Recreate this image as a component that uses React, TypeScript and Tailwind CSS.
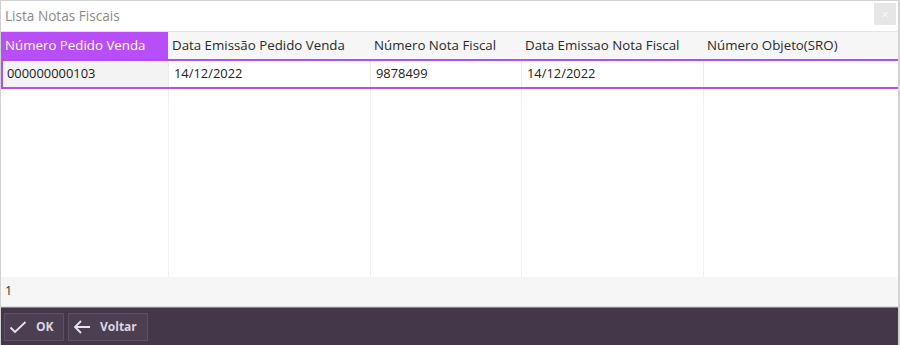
import React from "react";

const cols = [
  { w: "w-[167px]", title: "Número Pedido Venda", val: "000000000103" },
  { w: "w-[202px]", title: "Data Emissão Pedido Venda", val: "14/12/2022" },
  { w: "w-[151px]", title: "Número Nota Fiscal", val: "9878499" },
  { w: "w-[182px]", title: "Data Emissao Nota Fiscal", val: "14/12/2022" },
  { w: "flex-1", title: "Número Objeto(SRO)", val: "" },
];

export default function App() {
  return (
    <div
      className="w-[900px] h-[345px] bg-white flex flex-col border-l border-t border-r-2 border-[#d2d2d2] text-[12px] text-[#222]"
      style={{ fontFamily: '"Segoe UI", "Open Sans", "Noto Sans", sans-serif' }}
    >
      {/* title bar */}
      <div className="h-[30px] flex items-center justify-between pl-[4px] pr-[2px]">
        <span className="text-[13.6px] text-[#8a8a8a]">Lista Notas Fiscais</span>
        <div className="w-[22px] h-[22px] bg-[#e6e6e6] flex items-center justify-center text-[#f8f8f8] text-[13px] leading-none -mt-[4px]">
          ×
        </div>
      </div>
      {/* header */}
      <div className="h-[28px] flex bg-[#f6f6f6] border-t border-[#e4e4e4] text-[13.3px]">
        {cols.map((c, i) => (
          <div
            key={i}
            className={`${c.w} flex items-center whitespace-nowrap px-[4px] ${
              i === 0 ? "bg-[#b84ef5] text-white" : "text-[#2a2a2a]"
            }`}
          >
            {c.title}
          </div>
        ))}
      </div>
      {/* selected row */}
      <div className="h-[30px] flex border-y-2 border-[#b050ee] text-[12.9px]">
        {cols.map((c, i) => (
          <div
            key={i}
            className={`${c.w} flex items-center px-[4px] ${
              i === 0 ? "bg-[#f3f3f3] border-l-2 border-[#b050ee] pl-[4px]" : "border-l border-[#ececec] pl-[5px]"
            }`}
          >
            {c.val}
          </div>
        ))}
      </div>
      {/* empty area */}
      <div className="flex-1 flex">
        {cols.map((c, i) => (
          <div key={i} className={`${c.w} ${i === 0 ? "" : "border-l border-[#efefef]"}`} />
        ))}
      </div>
      {/* count */}
      <div className="h-[30px] bg-[#f6f6f6] flex items-center px-[4px] border-b border-[#e0e0e0] text-[#333] text-[12.5px]">
        1
      </div>
      {/* bottom bar */}
      <div className="h-[38px] bg-[#45374a] border-t border-[#8a8090] flex items-center gap-[4px] px-[3px]">
        <div className="h-[28px] w-[60px] bg-[#4c3f51] border border-[#5d5063] flex items-center gap-[9px] px-[4px] text-[#dcd6e2] font-bold text-[12px]">
          <svg width="18" height="14" viewBox="0 0 18 14" fill="none" stroke="#e8e4ee" strokeWidth="1.8">
            <path d="M1.5 7.5 L6 12 L16.5 2" />
          </svg>
          <span>OK</span>
        </div>
        <div className="h-[28px] w-[80px] bg-[#4c3f51] border border-[#5d5063] flex items-center gap-[9px] px-[4px] text-[#dcd6e2] font-bold text-[12px]">
          <svg width="18" height="14" viewBox="0 0 18 14" fill="none" stroke="#e8e4ee" strokeWidth="1.8">
            <path d="M17 7 H2 M8 1 L2 7 L8 13" />
          </svg>
          <span>Voltar</span>
        </div>
      </div>
    </div>
  );
}
